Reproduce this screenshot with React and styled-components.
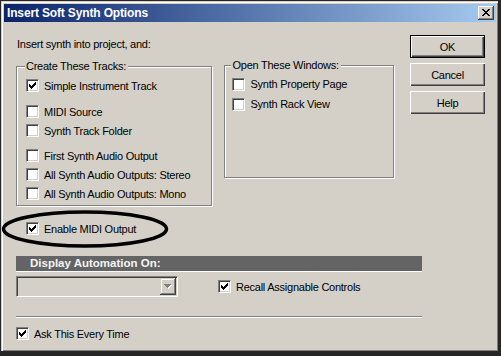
import React from 'react'
import styled, { createGlobalStyle } from 'styled-components'

const GlobalStyle = createGlobalStyle`
  body {
    margin: 0;
    background: #262626;
    font-family: "Liberation Sans", Arial, sans-serif;
  }
`

const CHECK = ['......x', '.....xx', 'x...xxx', 'xx.xxx.', 'xxxxx..', '.xxx...', '..x....']
const CLOSE = ['xx....xx', '.xx..xx.', '..xxxx..', '...xx...', '..xxxx..', '.xx..xx.', 'xx....xx']
const ARROW = ['xxxxxxx', '.xxxxx.', '..xxx..', '...x...']

const Pixels = ({ rows, color, shadow }) => {
    const w = rows[0].length + (shadow ? 1 : 0)
    const h = rows.length + (shadow ? 1 : 0)
    const draw = (fill, d) =>
        rows.flatMap((r, y) =>
            [...r].map((c, x) =>
                c === 'x' ? <rect key={`${fill}${x}-${y}`} x={x + d} y={y + d} width="1" height="1" fill={fill} /> : null
            )
        )
    return (
        <svg width={w} height={h} shapeRendering="crispEdges">
            {shadow && draw(shadow, 1)}
            {draw(color, 0)}
        </svg>
    )
}

const Window = styled.div`
    box-sizing: border-box;
    width: 501px;
    height: 356px;
    background: #d4d0c8;
    border-style: solid;
    border-color: #262626;
    border-width: 1px 3px 5px 1px;
    padding: 3px 2px 1px 3px;
    box-shadow: inset 1px 1px #d4d0c8, inset 2px 2px #ffffff, inset -1px -1px #808080;
    font-size: 11px;
    letter-spacing: -0.25px;
    color: #000;
    display: flex;
    flex-direction: column;
`

const TitleBar = styled.div`
    height: 18px;
    flex: none;
    display: flex;
    align-items: center;
    justify-content: space-between;
    padding: 0 2px 0 3px;
    background: linear-gradient(to right, #0a246a, #a6caf0);
`

const Title = styled.span`
    color: #fff;
    font-weight: bold;
    font-size: 12px;
    letter-spacing: -0.15px;
`

const CloseButton = styled.div`
    box-sizing: border-box;
    width: 16px;
    height: 14px;
    background: #d4d0c8;
    box-shadow: inset -1px -1px #404040, inset 1px 1px #fff, inset -2px -2px #808080;
    display: flex;
    align-items: center;
    justify-content: center;
    padding: 0 1px 1px 0;
`

const Body = styled.div`
    padding: 13px 0 0 12px;
`

const TopRow = styled.div`
    display: grid;
    grid-template-columns: 378px 75px;
    column-gap: 16px;
    align-items: start;
`

const Intro = styled.div`
    margin-top: 3px;
    line-height: 13px;
    padding-left: 1px;
`

const Groups = styled.div`
    display: flex;
    align-items: flex-start;
    gap: 12px;
    margin-top: 9px;
`

const Group = styled.fieldset`
    box-sizing: border-box;
    width: ${p => p.$w}px;
    min-inline-size: 0;
    margin: ${p => p.$shift || 0}px 0 0 0;
    padding: ${p => p.$pad};
    border: 1px solid #808080;
    box-shadow: inset 1px 1px #fff, 1px 1px #fff;
`

const Legend = styled.legend`
    padding: 0 2px 0 1px;
    margin-left: -1px;
    line-height: 13px;
    background: #d4d0c8;
`

const CheckRow = styled.label`
    display: flex;
    align-items: center;
    gap: 5px;
    height: ${p => p.$h || 19}px;
    margin-top: ${p => p.$mt || 0}px;
    padding-left: ${p => p.$indent || 0}px;
    white-space: nowrap;
    position: relative;
`

const Box = styled.span`
    box-sizing: border-box;
    width: 13px;
    height: 13px;
    flex: none;
    background: #fff;
    border: 1px solid;
    border-color: #808080 #fff #fff #808080;
    box-shadow: inset 1px 1px #404040, inset -1px -1px #d4d0c8;
    display: flex;
    align-items: center;
    justify-content: center;
`

// hand-drawn marker ring laid over the "Enable MIDI Output" row
const Ring = styled.svg`
    position: absolute;
    left: -15px;
    top: -10px;
    overflow: visible;
    pointer-events: none;
`

const ButtonColumn = styled.div`
    display: flex;
    flex-direction: column;
    gap: 5px;
`

const Button = styled.div`
    box-sizing: border-box;
    height: 23px;
    display: flex;
    align-items: center;
    justify-content: center;
    background: #d4d0c8;
    border: ${p => (p.$default ? '1px solid #000' : 'none')};
    box-shadow: inset 1px 1px #fff, inset -1px -1px #404040, inset -2px -2px #808080;
`

const Lower = styled.div`
    width: 406px;
    margin-top: 18px;
`

const SectionBar = styled.div`
    height: 15px;
    background: #646464;
    border-bottom: 1px solid #fff;
    color: #f4f4f4;
    font-weight: bold;
    font-size: 11.5px;
    letter-spacing: 0;
    line-height: 15px;
    padding-left: 14px;
`

const OptionsRow = styled.div`
    display: flex;
    align-items: center;
    gap: 40px;
    margin-top: 4px;
`

const Select = styled.div`
    box-sizing: border-box;
    width: 162px;
    height: 21px;
    border: 1px solid;
    border-color: #808080 #fff #fff #808080;
    box-shadow: inset 1px 1px #404040, inset -1px -1px #d4d0c8;
    background: #d4d0c8;
    padding: 1px;
    display: flex;
    justify-content: flex-end;
`

const SelectArrow = styled.div`
    box-sizing: border-box;
    width: 16px;
    height: 17px;
    box-shadow: inset -1px -1px #404040, inset 1px 1px #d4d0c8, inset -2px -2px #808080, inset 2px 2px #fff;
    display: flex;
    align-items: center;
    justify-content: center;
`

const Separator = styled.div`
    margin-top: 19px;
    border-top: 1px solid #808080;
    border-bottom: 1px solid #fff;
`

const Check = ({ checked, label, children, ...rest }) => (
    <CheckRow {...rest}>
        <Box>{checked && <Pixels rows={CHECK} color="#000" />}</Box>
        <span>{label}</span>
        {children}
    </CheckRow>
)

export default function App() {
    return (
        <>
            <GlobalStyle />
            <Window>
                <TitleBar>
                    <Title>Insert Soft Synth Options</Title>
                    <CloseButton>
                        <Pixels rows={CLOSE} color="#000" />
                    </CloseButton>
                </TitleBar>
                <Body>
                    <TopRow>
                        <div>
                            <Intro>Insert synth into project, and:</Intro>
                            <Groups>
                                <Group $w={197} $pad="3px 8px 2px 9px">
                                    <Legend>Create These Tracks:</Legend>
                                    <Check checked label="Simple Instrument Track" />
                                    <Check label="MIDI Source" $mt={7} />
                                    <Check label="Synth Track Folder" />
                                    <Check label="First Synth Audio Output" $mt={6} />
                                    <Check label="All Synth Audio Outputs: Stereo" />
                                    <Check label="All Synth Audio Outputs: Mono" />
                                </Group>
                                <Group $w={170} $shift={-1} $pad="2px 8px 63px 7px">
                                    <Legend>Open These Windows:</Legend>
                                    <Check label="Synth Property Page" $h={20} />
                                    <Check label="Synth Rack View" $h={20} />
                                </Group>
                            </Groups>
                            <Check checked label="Enable MIDI Output" $mt={13} $indent={10}>
                                <Ring width="168" height="40">
                                    <ellipse cx="84" cy="20" rx="81.5" ry="17" fill="none" stroke="#000" strokeWidth="3.5" />
                                </Ring>
                            </Check>
                        </div>
                        <ButtonColumn>
                            <Button $default>OK</Button>
                            <Button>Cancel</Button>
                            <Button>Help</Button>
                        </ButtonColumn>
                    </TopRow>
                    <Lower>
                        <SectionBar>Display Automation On:</SectionBar>
                        <OptionsRow>
                            <Select>
                                <SelectArrow>
                                    <Pixels rows={ARROW} color="#808080" shadow="#fff" />
                                </SelectArrow>
                            </Select>
                            <Check checked label="Recall Assignable Controls" />
                        </OptionsRow>
                        <Separator />
                        <Check checked label="Ask This Every Time" $mt={6} />
                    </Lower>
                </Body>
            </Window>
        </>
    )
}
